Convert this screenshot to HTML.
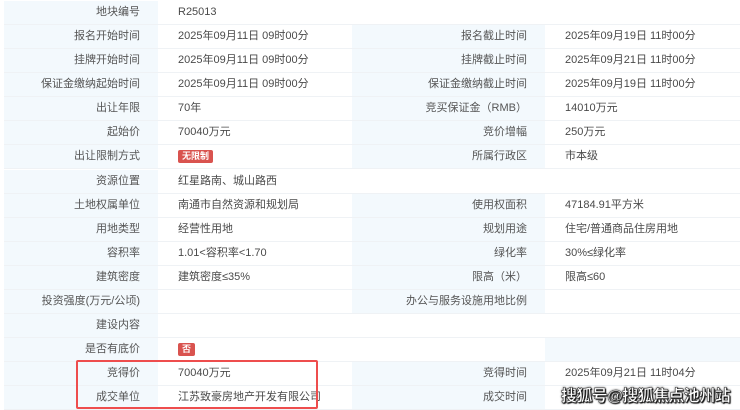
<!DOCTYPE html>
<html><head><meta charset="utf-8"><style>
body{margin:0;width:740px;height:410px;overflow:hidden;background:#fff;font-family:"Liberation Sans","Noto Sans CJK SC",sans-serif;font-size:11px;color:#444;position:relative}
.r{position:absolute;left:4px;width:736px;height:24px;border-bottom:1px solid #eff2f5;box-sizing:border-box}
.c{position:absolute;top:0;height:23px;line-height:23px;box-sizing:border-box}
.l{background:#f3f9fd;text-align:right;padding-right:18px;color:#555}
.v{background:#fff;padding-left:20px;color:#4a4a4a}
.c1{left:0;width:154px}.c2{left:154px;width:194px}.c3{left:348px;width:193px}.c4{left:541px;width:195px}
.full{left:154px;width:582px}
.b{display:inline-block;background:#d9534f;color:#fff;font-size:9px;font-weight:bold;line-height:13px;padding:0 4px;border-radius:2px;vertical-align:middle}
.box{position:absolute;left:76px;top:360px;width:242px;height:49px;border:2px solid #ee4d4d;border-radius:2px;box-sizing:border-box}
.wm{position:absolute;left:561px;top:382px;font-size:16px;font-weight:bold;color:#fff;white-space:nowrap;letter-spacing:-0.6px;-webkit-text-stroke:0.5px #333;text-shadow:0 0 2px #000,1px 1px 1px #000}
</style></head><body>
<div class="r" style="top:1px"><div class="c l c1">地块编号</div><div class="c v full">R25013</div></div>
<div class="r" style="top:25px"><div class="c l c1">报名开始时间</div><div class="c v c2">2025年09月11日 09时00分</div><div class="c l c3">报名截止时间</div><div class="c v c4">2025年09月19日 11时00分</div></div>
<div class="r" style="top:49px"><div class="c l c1">挂牌开始时间</div><div class="c v c2">2025年09月11日 09时00分</div><div class="c l c3">挂牌截止时间</div><div class="c v c4">2025年09月21日 11时00分</div></div>
<div class="r" style="top:73px"><div class="c l c1">保证金缴纳起始时间</div><div class="c v c2">2025年09月11日 09时00分</div><div class="c l c3">保证金缴纳截止时间</div><div class="c v c4">2025年09月19日 11时00分</div></div>
<div class="r" style="top:97px"><div class="c l c1">出让年限</div><div class="c v c2">70年</div><div class="c l c3">竞买保证金（RMB）</div><div class="c v c4">14010万元</div></div>
<div class="r" style="top:121px"><div class="c l c1">起始价</div><div class="c v c2">70040万元</div><div class="c l c3">竞价增幅</div><div class="c v c4">250万元</div></div>
<div class="r" style="top:145px"><div class="c l c1">出让限制方式</div><div class="c v c2"><span class="b">无限制</span></div><div class="c l c3">所属行政区</div><div class="c v c4">市本级</div></div>
<div class="r" style="top:170px"><div class="c l c1">资源位置</div><div class="c v full">红星路南、城山路西</div></div>
<div class="r" style="top:194px"><div class="c l c1">土地权属单位</div><div class="c v c2">南通市自然资源和规划局</div><div class="c l c3">使用权面积</div><div class="c v c4">47184.91平方米</div></div>
<div class="r" style="top:218px"><div class="c l c1">用地类型</div><div class="c v c2">经营性用地</div><div class="c l c3">规划用途</div><div class="c v c4">住宅/普通商品住房用地</div></div>
<div class="r" style="top:242px"><div class="c l c1">容积率</div><div class="c v c2">1.01&lt;容积率&lt;1.70</div><div class="c l c3">绿化率</div><div class="c v c4">30%≤绿化率</div></div>
<div class="r" style="top:266px"><div class="c l c1">建筑密度</div><div class="c v c2">建筑密度≤35%</div><div class="c l c3">限高（米）</div><div class="c v c4">限高≤60</div></div>
<div class="r" style="top:290px"><div class="c l c1">投资强度(万元/公顷)</div><div class="c v c2"></div><div class="c l c3">办公与服务设施用地比例</div><div class="c v c4"></div></div>
<div class="r" style="top:314px"><div class="c l c1">建设内容</div><div class="c v full"></div></div>
<div class="r" style="top:338px"><div class="c l c1">是否有底价</div><div class="c v c2"><span class="b">否</span></div><div class="c v c3"></div><div class="c l c4"></div></div>
<div class="r" style="top:362px"><div class="c l c1">竞得价</div><div class="c v c2">70040万元</div><div class="c l c3">竞得时间</div><div class="c v c4">2025年09月21日 11时04分</div></div>
<div class="r" style="top:386px"><div class="c l c1">成交单位</div><div class="c v c2">江苏致豪房地产开发有限公司</div><div class="c l c3">成交时间</div><div class="c v c4"></div></div>
<div class="box"></div>
<div class="wm">搜狐号@搜狐焦点池州站</div>
</body></html>
